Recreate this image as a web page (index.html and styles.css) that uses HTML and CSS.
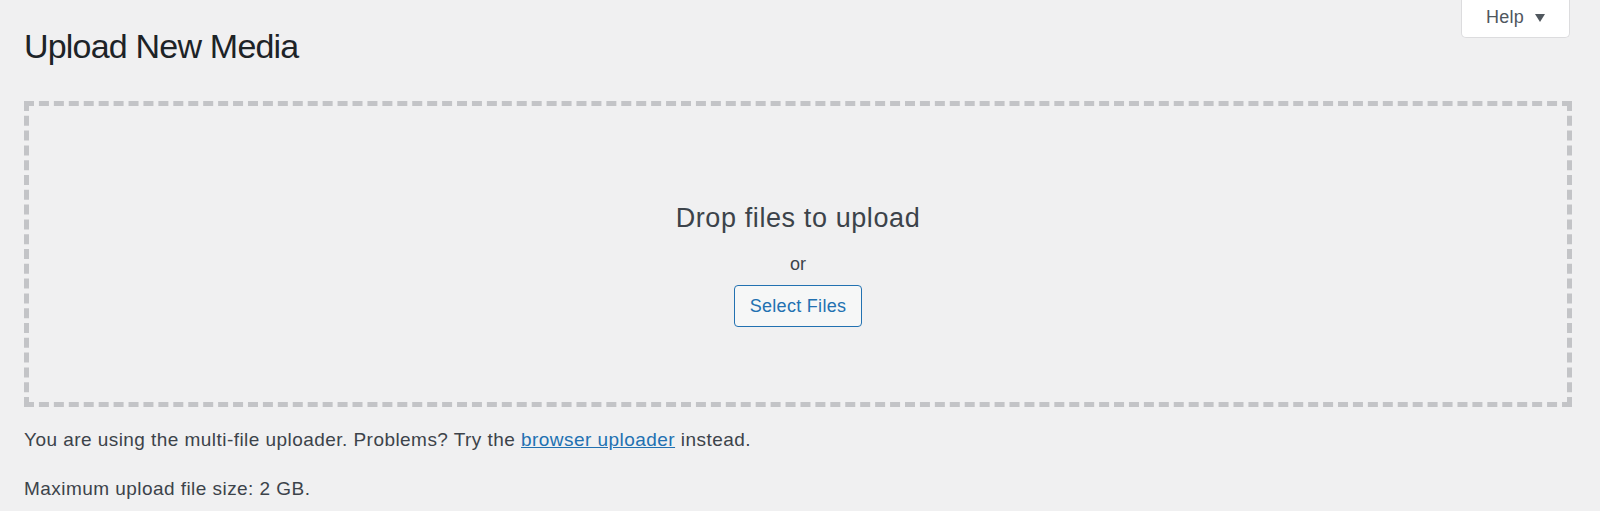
FILE: index.html
```html
<!DOCTYPE html>
<html lang="en">
<head>
<meta charset="utf-8">
<title>Upload New Media</title>
<link rel="stylesheet" href="styles.css">
</head>
<body>
<div class="wrap">
  <header class="page-header">
    <h1 class="page-title">Upload New Media</h1>
    <button class="help-tab" type="button">
      <span class="help-label">Help</span>
      <svg class="help-arrow" width="10" height="8" viewBox="0 0 10 8" aria-hidden="true"><polygon points="0,0 10,0 5,8" fill="#50575e"/></svg>
    </button>
  </header>

  <div class="drop-area">
    <p class="drop-title">Drop files to upload</p>
    <p class="drop-or">or</p>
    <button class="select-btn" type="button">Select Files</button>
  </div>

  <p class="note">You are using the multi-file uploader. Problems? Try the <a class="note-link" href="#">browser uploader</a> instead.</p>
  <p class="note note-size">Maximum upload file size: 2 GB.</p>
</div>
</body>
</html>
```

FILE: styles.css
```css
html, body {
  margin: 0;
  padding: 0;
}

body {
  background: #f0f0f1;
  font-family: "Liberation Sans", Arial, Helvetica, sans-serif;
  color: #3c434a;
}

.wrap {
  padding: 0 28px 0 24px;
}

.page-header {
  display: flex;
  justify-content: space-between;
  align-items: flex-start;
}

.page-title {
  margin: 26px 0 0;
  font-size: 34px;
  line-height: 40px;
  font-weight: 400;
  letter-spacing: -0.8px;
  color: #1d2327;
}

.help-tab {
  box-sizing: border-box;
  width: 109px;
  height: 38px;
  margin-right: 2px;
  padding: 0 0 2px;
  display: flex;
  align-items: center;
  justify-content: center;
  gap: 11px;
  background: #ffffff;
  border: 1px solid #dcdcde;
  border-top: none;
  border-radius: 0 0 5px 5px;
  font-family: "Liberation Sans", Arial, Helvetica, sans-serif;
  font-size: 18px;
  color: #50575e;
  cursor: pointer;
}

.help-label {
  letter-spacing: 0.3px;
}

.help-arrow {
  display: block;
  margin-top: 1px;
}

.drop-area {
  margin-top: 35px;
  border: 5px dashed #c3c4c7;
  padding: 95px 20px 75px;
  display: flex;
  flex-direction: column;
  align-items: center;
}

.drop-title {
  margin: 0;
  font-size: 27px;
  line-height: 34px;
  letter-spacing: 0.6px;
  color: #3c434a;
}

.drop-or {
  margin: 17px 0 0;
  font-size: 18px;
  line-height: 24px;
  color: #3c434a;
}

.select-btn {
  box-sizing: border-box;
  margin-top: 9px;
  height: 42px;
  padding: 0 15px;
  background: #f6f7f7;
  border: 1px solid #2271b1;
  border-radius: 4px;
  font-family: "Liberation Sans", Arial, Helvetica, sans-serif;
  font-size: 18px;
  letter-spacing: 0.3px;
  color: #2271b1;
  cursor: pointer;
}

.note {
  margin: 20px 0 0;
  font-size: 19px;
  line-height: 26px;
  letter-spacing: 0.45px;
  color: #3c434a;
}

.note-size {
  margin-top: 23px;
}

.note-link {
  color: #2271b1;
  text-decoration: underline;
}
```
